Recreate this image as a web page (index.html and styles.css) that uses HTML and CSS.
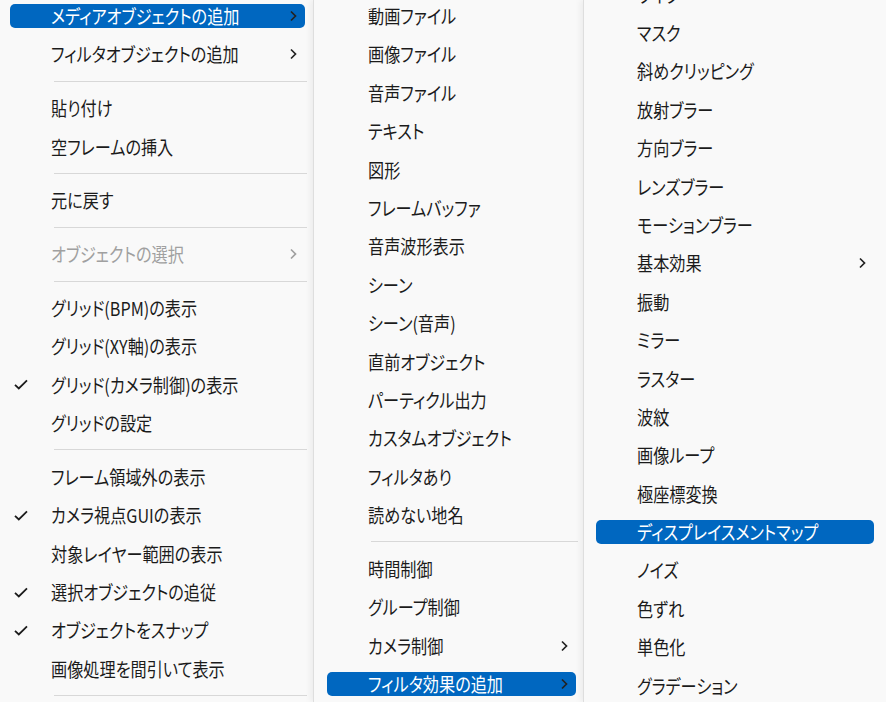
FILE: index.html
```html
<!DOCTYPE html>
<html lang="ja">
<head>
    <meta charset="UTF-8">
    <meta name="viewport" content="width=device-width, initial-scale=1.0">
    <title>Context Menu</title>
    <link rel="stylesheet" href="styles.css">
</head>
<body>

    <div class="menus">
        <!-- Main context menu -->
        <div class="menu menu-main">
            <ul class="list">
                <li class="item active"><span class="mark"></span><span class="label">メディアオブジェクトの追加</span><svg class="arrow" viewBox="0 0 8 12"><path d="M2 1.5 L6.5 6 L2 10.5"/></svg></li>
                <li class="item"><span class="mark"></span><span class="label">フィルタオブジェクトの追加</span><svg class="arrow" viewBox="0 0 8 12"><path d="M2 1.5 L6.5 6 L2 10.5"/></svg></li>
                <li class="sep"></li>
                <li class="item"><span class="mark"></span><span class="label">貼り付け</span></li>
                <li class="item"><span class="mark"></span><span class="label">空フレームの挿入</span></li>
                <li class="sep"></li>
                <li class="item"><span class="mark"></span><span class="label">元に戻す</span></li>
                <li class="sep"></li>
                <li class="item disabled"><span class="mark"></span><span class="label">オブジェクトの選択</span><svg class="arrow" viewBox="0 0 8 12"><path d="M2 1.5 L6.5 6 L2 10.5"/></svg></li>
                <li class="sep"></li>
                <li class="item"><span class="mark"></span><span class="label">グリッド(BPM)の表示</span></li>
                <li class="item"><span class="mark"></span><span class="label">グリッド(XY軸)の表示</span></li>
                <li class="item"><span class="mark"><svg class="check" viewBox="0 0 14 11"><path d="M1 5.8 L4.8 9.4 L13 1.4"/></svg></span><span class="label">グリッド(カメラ制御)の表示</span></li>
                <li class="item"><span class="mark"></span><span class="label">グリッドの設定</span></li>
                <li class="sep"></li>
                <li class="item"><span class="mark"></span><span class="label">フレーム領域外の表示</span></li>
                <li class="item"><span class="mark"><svg class="check" viewBox="0 0 14 11"><path d="M1 5.8 L4.8 9.4 L13 1.4"/></svg></span><span class="label">カメラ視点GUIの表示</span></li>
                <li class="item"><span class="mark"></span><span class="label">対象レイヤー範囲の表示</span></li>
                <li class="item"><span class="mark"><svg class="check" viewBox="0 0 14 11"><path d="M1 5.8 L4.8 9.4 L13 1.4"/></svg></span><span class="label">選択オブジェクトの追従</span></li>
                <li class="item"><span class="mark"><svg class="check" viewBox="0 0 14 11"><path d="M1 5.8 L4.8 9.4 L13 1.4"/></svg></span><span class="label">オブジェクトをスナップ</span></li>
                <li class="item"><span class="mark"></span><span class="label">画像処理を間引いて表示</span></li>
                <li class="sep"></li>
            </ul>
        </div>

        <!-- Media object submenu -->
        <div class="menu menu-sub">
            <ul class="list">
                <li class="item"><span class="mark"></span><span class="label">動画ファイル</span></li>
                <li class="item"><span class="mark"></span><span class="label">画像ファイル</span></li>
                <li class="item"><span class="mark"></span><span class="label">音声ファイル</span></li>
                <li class="item"><span class="mark"></span><span class="label">テキスト</span></li>
                <li class="item"><span class="mark"></span><span class="label">図形</span></li>
                <li class="item"><span class="mark"></span><span class="label">フレームバッファ</span></li>
                <li class="item"><span class="mark"></span><span class="label">音声波形表示</span></li>
                <li class="item"><span class="mark"></span><span class="label">シーン</span></li>
                <li class="item"><span class="mark"></span><span class="label">シーン(音声)</span></li>
                <li class="item"><span class="mark"></span><span class="label">直前オブジェクト</span></li>
                <li class="item"><span class="mark"></span><span class="label">パーティクル出力</span></li>
                <li class="item"><span class="mark"></span><span class="label">カスタムオブジェクト</span></li>
                <li class="item"><span class="mark"></span><span class="label">フィルタあり</span></li>
                <li class="item"><span class="mark"></span><span class="label">読めない地名</span></li>
                <li class="sep"></li>
                <li class="item"><span class="mark"></span><span class="label">時間制御</span></li>
                <li class="item"><span class="mark"></span><span class="label">グループ制御</span></li>
                <li class="item"><span class="mark"></span><span class="label">カメラ制御</span><svg class="arrow" viewBox="0 0 8 12"><path d="M2 1.5 L6.5 6 L2 10.5"/></svg></li>
                <li class="item active"><span class="mark"></span><span class="label">フィルタ効果の追加</span><svg class="arrow" viewBox="0 0 8 12"><path d="M2 1.5 L6.5 6 L2 10.5"/></svg></li>
            </ul>
        </div>

        <!-- Filter effect submenu (scrolled) -->
        <div class="menu menu-filter">
            <ul class="list">
                <li class="item"><span class="mark"></span><span class="label">ワイプ</span></li>
                <li class="item"><span class="mark"></span><span class="label">マスク</span></li>
                <li class="item"><span class="mark"></span><span class="label">斜めクリッピング</span></li>
                <li class="item"><span class="mark"></span><span class="label">放射ブラー</span></li>
                <li class="item"><span class="mark"></span><span class="label">方向ブラー</span></li>
                <li class="item"><span class="mark"></span><span class="label">レンズブラー</span></li>
                <li class="item"><span class="mark"></span><span class="label">モーションブラー</span></li>
                <li class="item"><span class="mark"></span><span class="label">基本効果</span><svg class="arrow" viewBox="0 0 8 12"><path d="M2 1.5 L6.5 6 L2 10.5"/></svg></li>
                <li class="item"><span class="mark"></span><span class="label">振動</span></li>
                <li class="item"><span class="mark"></span><span class="label">ミラー</span></li>
                <li class="item"><span class="mark"></span><span class="label">ラスター</span></li>
                <li class="item"><span class="mark"></span><span class="label">波紋</span></li>
                <li class="item"><span class="mark"></span><span class="label">画像ループ</span></li>
                <li class="item"><span class="mark"></span><span class="label">極座標変換</span></li>
                <li class="item active"><span class="mark"></span><span class="label">ディスプレイスメントマップ</span></li>
                <li class="item"><span class="mark"></span><span class="label">ノイズ</span></li>
                <li class="item"><span class="mark"></span><span class="label">色ずれ</span></li>
                <li class="item"><span class="mark"></span><span class="label">単色化</span></li>
                <li class="item"><span class="mark"></span><span class="label">グラデーション</span></li>
            </ul>
        </div>
    </div>

</body>
</html>
```

FILE: styles.css
```css
/* Page */
html, body {
    height: 100%;
    margin: 0;
    overflow: hidden;
}

body {
    background-color: #f9f9f9;
    font-family: "Noto Sans CJK JP", "Noto Sans", sans-serif;
    font-size: 19px;
    font-feature-settings: "palt";
    color: #1b1b1b;
}

/* Menu columns */
.menus {
    display: flex;
    align-items: flex-start;
    height: 100%;
}

.menu {
    height: 100%;
    background-color: #f9f9f9;
    padding-top: 4px;
    box-sizing: border-box;
    position: relative;
}

.menu-main {
    width: 313px;
    --inset-l: 10px;
    --inset-r: 8px;
}

.menu-sub {
    width: 270px;
    border-left: 1px solid #dedede;
    box-shadow: -3px 0 6px rgba(0, 0, 0, 0.05);
    --inset-l: 13px;
    --inset-r: 7px;
}

.menu-filter {
    flex: 1;
    border-left: 1px solid #dedede;
    box-shadow: -3px 0 6px rgba(0, 0, 0, 0.05);
    --inset-l: 12px;
    --inset-r: 12px;
}

/* this one is scrolled down a bit */
.menu-filter .list {
    margin-top: -21.4px;
}

/* Items */
.list {
    list-style: none;
    margin: 0;
    padding: 0;
    display: flex;
    flex-direction: column;
    gap: 14.4px;
}

.item {
    display: flex;
    align-items: center;
    height: 24px;
    margin: 0 var(--inset-r) 0 var(--inset-l);
    border-radius: 5px;
    white-space: nowrap;
}

.mark {
    width: 41px;
    flex-shrink: 0;
    display: flex;
    align-items: center;
    padding-left: 4px;
    box-sizing: border-box;
}

/* the UI font is narrow, squeeze Noto a little to match */
.label {
    flex: 1;
    line-height: 24px;
    transform: scaleX(0.85);
    transform-origin: left center;
}

.item.active {
    background-color: #0067c0;
    color: #fff;
}

.item.disabled {
    color: #a0a0a0;
}

/* Icons */
.check {
    width: 14px;
    height: 11px;
    fill: none;
    stroke: #1b1b1b;
    stroke-width: 1.8;
}

.arrow {
    width: 8px;
    height: 12px;
    margin-right: 8px;
    fill: none;
    stroke: #222;
    stroke-width: 1.7;
}

.item.disabled .arrow {
    stroke: #a0a0a0;
}

/* Separator */
.sep {
    height: 1px;
    background-color: #d8d8d8;
    margin: 0 calc(var(--inset-r) - 2px) 0 calc(var(--inset-l) + 44px);
}
```
